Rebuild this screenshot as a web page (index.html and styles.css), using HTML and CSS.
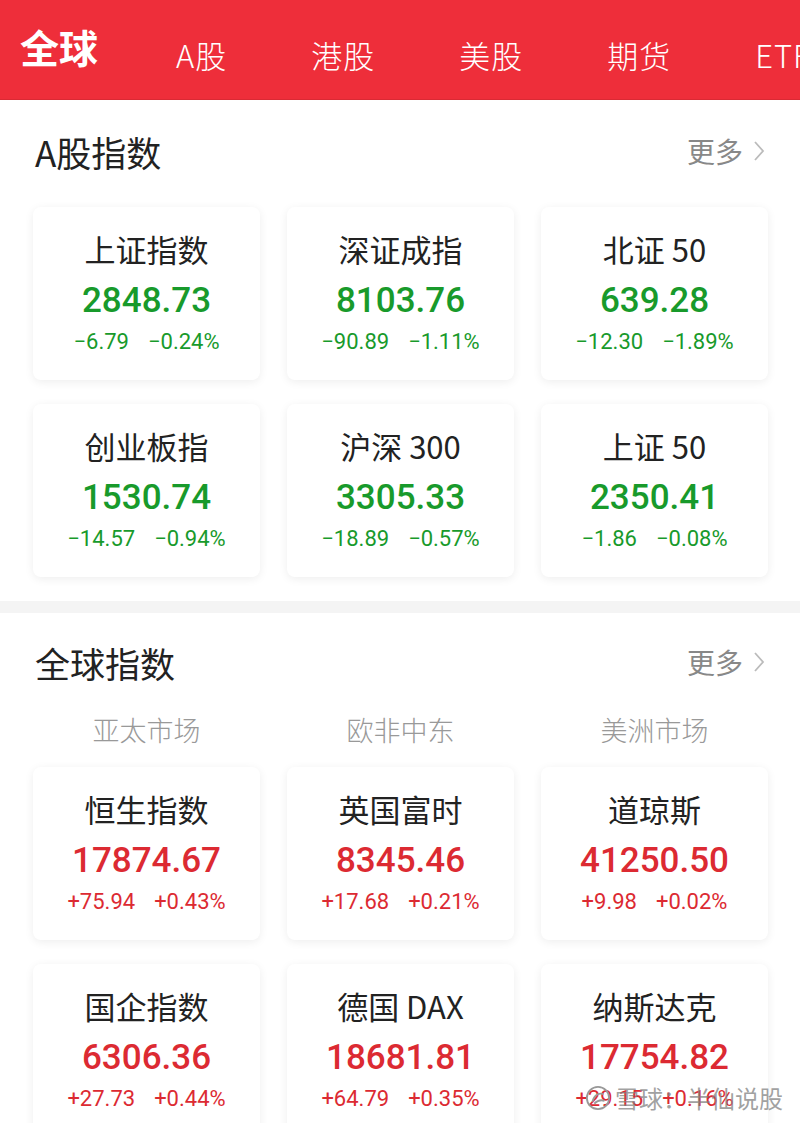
FILE: index.html
```html
<!DOCTYPE html>
<html lang="zh-CN">
<head>
<meta charset="utf-8">
<title>行情</title>
<link rel="stylesheet" href="styles.css">
</head>
<body>
<div class="page">
  <nav class="tabs">
    <span class="tab active">全球</span>
    <span class="tab">A股</span>
    <span class="tab">港股</span>
    <span class="tab">美股</span>
    <span class="tab">期货</span>
    <span class="tab">ETF</span>
  </nav>

  <section class="section first">
    <div class="sec-head">
      <h2 class="sec-title">A股指数</h2>
      <span class="more">更多<svg class="chev" viewBox="0 0 12 22" width="12" height="22"><path d="M2 2 L10 11 L2 20" fill="none" stroke="#bbb" stroke-width="1.8"/></svg></span>
    </div>
    <div class="grid">
      <div class="card down"><div class="name">上证指数</div><div class="value">2848.73</div><div class="chg"><span>−6.79</span><span>−0.24%</span></div></div>
      <div class="card down"><div class="name">深证成指</div><div class="value">8103.76</div><div class="chg"><span>−90.89</span><span>−1.11%</span></div></div>
      <div class="card down"><div class="name">北证 50</div><div class="value">639.28</div><div class="chg"><span>−12.30</span><span>−1.89%</span></div></div>
      <div class="card down"><div class="name">创业板指</div><div class="value">1530.74</div><div class="chg"><span>−14.57</span><span>−0.94%</span></div></div>
      <div class="card down"><div class="name">沪深 300</div><div class="value">3305.33</div><div class="chg"><span>−18.89</span><span>−0.57%</span></div></div>
      <div class="card down"><div class="name">上证 50</div><div class="value">2350.41</div><div class="chg"><span>−1.86</span><span>−0.08%</span></div></div>
    </div>
  </section>

  <div class="band"></div>

  <section class="section">
    <div class="sec-head second">
      <h2 class="sec-title">全球指数</h2>
      <span class="more">更多<svg class="chev" viewBox="0 0 12 22" width="12" height="22"><path d="M2 2 L10 11 L2 20" fill="none" stroke="#bbb" stroke-width="1.8"/></svg></span>
    </div>
    <div class="grid regions">
      <div class="region">亚太市场</div>
      <div class="region">欧非中东</div>
      <div class="region">美洲市场</div>
    </div>
    <div class="grid">
      <div class="card up"><div class="name">恒生指数</div><div class="value">17874.67</div><div class="chg"><span>+75.94</span><span>+0.43%</span></div></div>
      <div class="card up"><div class="name">英国富时</div><div class="value">8345.46</div><div class="chg"><span>+17.68</span><span>+0.21%</span></div></div>
      <div class="card up"><div class="name">道琼斯</div><div class="value">41250.50</div><div class="chg"><span>+9.98</span><span>+0.02%</span></div></div>
      <div class="card up"><div class="name">国企指数</div><div class="value">6306.36</div><div class="chg"><span>+27.73</span><span>+0.44%</span></div></div>
      <div class="card up"><div class="name">德国 DAX</div><div class="value">18681.81</div><div class="chg"><span>+64.79</span><span>+0.35%</span></div></div>
      <div class="card up"><div class="name">纳斯达克</div><div class="value">17754.82</div><div class="chg"><span>+29.15</span><span>+0.16%</span></div></div>
    </div>
  </section>

  <div class="watermark">
    <svg class="wm-logo" viewBox="0 0 28 28" width="26" height="26"><circle cx="14" cy="14" r="12" fill="none" stroke="#999" stroke-width="2"/><path d="M8 18 C10 10, 16 8, 20 10 M10 20 C14 16, 18 16, 21 17" fill="none" stroke="#999" stroke-width="2"/></svg>
    <span>雪球：半仙说股</span>
  </div>
</div>
</body>
</html>
```

FILE: styles.css
```css
* { box-sizing: border-box; }
html, body { margin: 0; padding: 0; background: #fff; }
body {
  font-family: "Noto Sans CJK SC", "Noto Sans", sans-serif;
  color: #222;
  width: 800px;
  height: 1123px;
  overflow: hidden;
}
.page { position: relative; width: 800px; height: 1123px; overflow: hidden; }

.tabs {
  height: 100px;
  background: #ee2e3a;
  border-bottom: 1px solid #d92a34;
  display: flex;
  align-items: center;
  gap: 84px;
  padding-left: 20px;
  white-space: nowrap;
  overflow: hidden;
  color: #fff;
}
.tab { font-size: 31px; line-height: 40px; padding-top: 10px; letter-spacing: 1px; font-weight: 300; }
.tab.active { font-size: 39px; font-weight: 700; padding-top: 0; margin-top: -8px; letter-spacing: 0; margin-right: -6px; }

.section { padding: 0 33px 24px; }
.sec-head {
  height: 107px;
  display: flex;
  align-items: center;
  justify-content: space-between;
  padding-left: 2px;
  padding-bottom: 5px;
}
.sec-head.second { height: 100px; padding-bottom: 2px; }
.sec-title { margin: 0; font-size: 35px; font-weight: 400; color: #222; }
.more {
  display: flex;
  align-items: center;
  gap: 10px;
  font-size: 28px;
  color: #888;
  margin-right: 2px;
}
.chev { display: block; }

.grid {
  display: grid;
  grid-template-columns: repeat(3, 227px);
  column-gap: 27px;
  row-gap: 24px;
}
.regions { margin-bottom: 20px; }
.region {
  height: 34px;
  line-height: 34px;
  text-align: center;
  font-size: 27px;
  color: #999;
  font-weight: 300;
}

.card {
  height: 173px;
  background: #fff;
  border-radius: 8px;
  box-shadow: 0 2px 10px rgba(0, 0, 0, 0.07);
  display: flex;
  flex-direction: column;
  align-items: center;
  padding-top: 25px;
}
.name { font-size: 31px; line-height: 34px; color: #222; }
.value {
  font-family: Roboto, "Noto Sans", sans-serif;
  font-weight: 500;
  font-size: 35px;
  line-height: 40px;
  margin-top: 15px;
}
.chg {
  font-family: Roboto, "Noto Sans", sans-serif;
  font-size: 22px;
  line-height: 28px;
  margin-top: 7px;
  display: flex;
  gap: 19px;
}
.down .value, .down .chg { color: #189a2b; }
.up .value, .up .chg { color: #dc2a32; }

.band { height: 12px; background: #f4f4f4; }

.watermark {
  position: absolute;
  left: 585px;
  top: 1083px;
  display: flex;
  align-items: center;
  gap: 4px;
  color: rgba(130, 130, 130, 0.75);
  font-size: 24px;
  line-height: 30px;
}
.wm-logo { display: block; }
```
